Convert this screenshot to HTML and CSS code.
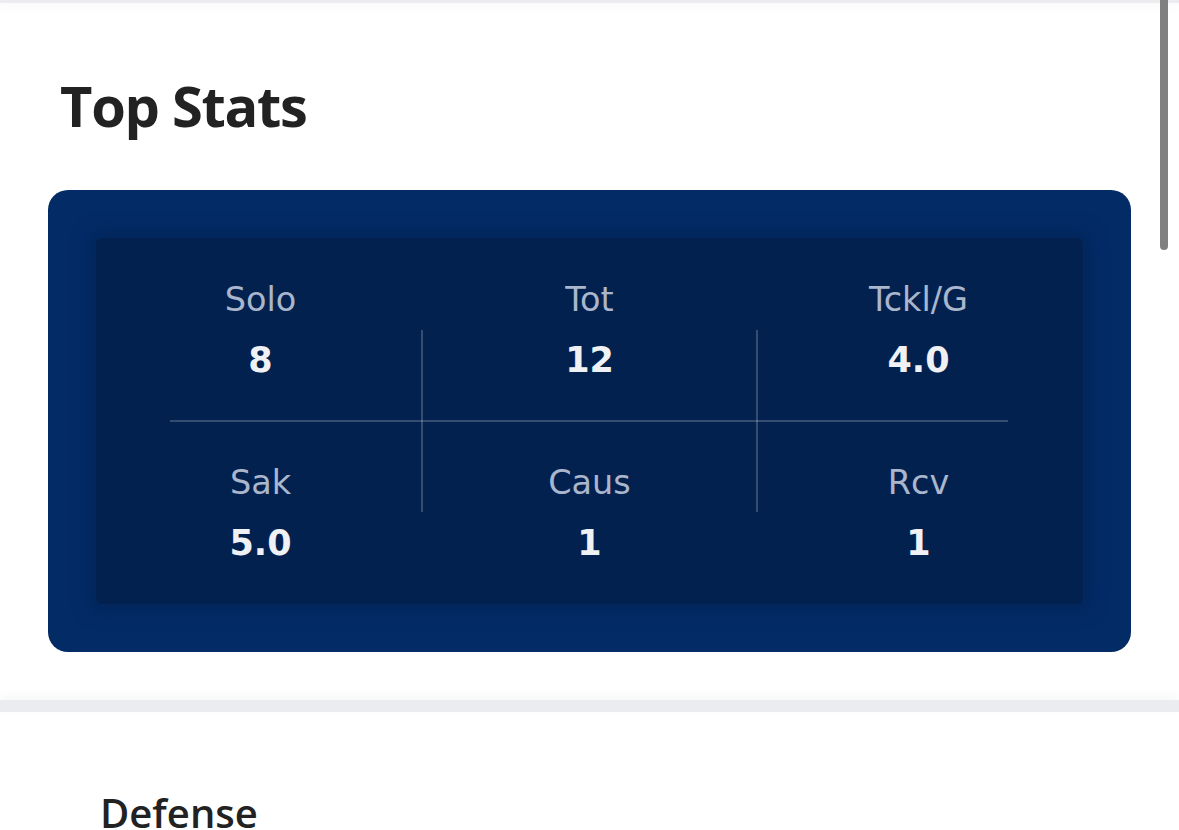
FILE: index.html
```html
<!DOCTYPE html>
<html lang="en">
<head>
<meta charset="utf-8">
<title>Top Stats</title>
<link rel="stylesheet" href="styles.css">
</head>
<body>
<div class="top-strip"></div>
<section class="top-stats">
  <h2 class="section-title">Top Stats</h2>
  <div class="stats-card">
    <div class="stats-panel">
      <div class="stat"><span class="stat-label">Solo</span><span class="stat-value">8</span></div>
      <div class="stat"><span class="stat-label">Tot</span><span class="stat-value">12</span></div>
      <div class="stat"><span class="stat-label">Tckl/G</span><span class="stat-value">4.0</span></div>
      <div class="stat"><span class="stat-label">Sak</span><span class="stat-value">5.0</span></div>
      <div class="stat"><span class="stat-label">Caus</span><span class="stat-value">1</span></div>
      <div class="stat"><span class="stat-label">Rcv</span><span class="stat-value">1</span></div>
      <span class="rule rule-h"></span>
      <span class="rule rule-v1"></span>
      <span class="rule rule-v2"></span>
    </div>
  </div>
</section>
<div class="section-divider"></div>
<section class="defense">
  <h3 class="defense-title">Defense</h3>
</section>
<div class="scrollbar"></div>
</body>
</html>
```
FILE: styles.css
```css
html, body {
  margin: 0;
  padding: 0;
  background: #ffffff;
  overflow: hidden;
}
body {
  font-family: "DejaVu Sans", sans-serif;
  width: 1179px;
  height: 830px;
  position: relative;
}
.top-strip {
  height: 3px;
  background: #ebecef;
  box-shadow: 0 2px 10px rgba(200, 202, 210, 0.25);
}
.top-stats {
  padding: 0 48px;
}
.section-title {
  margin: 69px 0 0 12px;
  font-family: "Open Sans", "Noto Sans", sans-serif;
  font-weight: 700;
  font-size: 56px;
  line-height: 67px;
  color: #222222;
  letter-spacing: -1.3px;
}
.stats-card {
  margin-top: 51px;
  background: #032b66;
  border-radius: 20px;
  padding: 48px;
}
.stats-panel {
  position: relative;
  display: grid;
  grid-template-columns: repeat(3, 1fr);
  grid-template-rows: 183px 183px;
  background: #03214f;
  border-radius: 6px;
  box-shadow: 0 0 18px 6px rgba(2, 36, 88, 0.8);
}
.stat {
  display: flex;
  flex-direction: column;
  align-items: center;
  justify-content: center;
  gap: 20px;
  padding-top: 1px;
}
.stat-label {
  font-size: 33.5px;
  line-height: 40px;
  color: #aab6cc;
}
.stat-value {
  font-size: 35px;
  line-height: 40px;
  font-weight: 700;
  color: #f0f1f4;
}
.rule {
  position: absolute;
  background: rgba(255, 255, 255, 0.2);
}
.rule-h {
  left: 74px;
  right: 75px;
  top: 182px;
  height: 2px;
}
.rule-v1 {
  left: 325px;
  top: 92px;
  width: 2px;
  height: 182px;
}
.rule-v2 {
  left: 660px;
  top: 92px;
  width: 2px;
  height: 182px;
}
.section-divider {
  margin-top: 48px;
  height: 12px;
  background: #ebecef;
  box-shadow: 0 -4px 10px rgba(230, 232, 236, 0.35);
}
.defense {
  padding: 0 0 0 100px;
}
.defense-title {
  margin: 77px 0 0 0;
  font-family: "Open Sans", "Noto Sans", sans-serif;
  font-weight: 600;
  font-size: 40px;
  line-height: 48px;
  color: #222222;
}
.scrollbar {
  position: absolute;
  top: 0;
  left: 1160px;
  width: 8px;
  height: 250px;
  background: #808080;
  border-radius: 0 0 4px 4px;
}
```
